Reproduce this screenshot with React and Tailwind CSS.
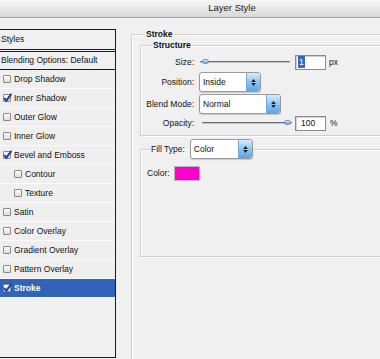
import React from 'react';

const items = [
  { label: 'Drop Shadow' },
  { label: 'Inner Shadow', checked: true },
  { label: 'Outer Glow' },
  { label: 'Inner Glow' },
  { label: 'Bevel and Emboss', checked: true },
  { label: 'Contour', sub: true },
  { label: 'Texture', sub: true },
  { label: 'Satin' },
  { label: 'Color Overlay' },
  { label: 'Gradient Overlay' },
  { label: 'Pattern Overlay' },
  { label: 'Stroke', checked: true, active: true },
];

const Check = ({ checked }) => (
  <span className="relative w-[8px] h-[8px] shrink-0 border border-[#8a8a8a] rounded-[1px] bg-gradient-to-b from-[#ffffff] to-[#dcdcdc]">
    {checked && (
      <svg viewBox="0 0 8 8" className="absolute -left-[1px] -top-[2px] w-[9px] h-[9px]">
        <path d="M1 4.5 L3 6.8 L7.5 0.8" fill="none" stroke="#1f3f9a" strokeWidth="1.8" />
      </svg>
    )}
  </span>
);

const Spinner = () => (
  <span className="w-[14px] h-full flex flex-col items-center justify-center gap-[1px] bg-gradient-to-b from-[#d6ecff] via-[#8cc4f4] to-[#5aa4e8] border-l border-[#7aa7d6] rounded-r-[3px]">
    <svg viewBox="0 0 6 4" className="w-[5px] h-[3px]"><path d="M3 0 L6 4 L0 4 Z" fill="#1a1a1a" /></svg>
    <svg viewBox="0 0 6 4" className="w-[5px] h-[3px]"><path d="M0 0 L6 0 L3 4 Z" fill="#1a1a1a" /></svg>
  </span>
);

const Select = ({ value, width }) => (
  <div className={`flex items-stretch h-[20px] bg-white border border-[#9a9a9a] rounded-[3px] shadow-[0_1px_1px_#c8c8c8] ${width}`}>
    <span className="flex-1 flex items-center pl-[3px] text-[8.5px] text-[#111]">{value}</span>
    <Spinner />
  </div>
);

const Slider = ({ thumbRight }) => (
  <div className="relative w-[90px] h-[10px] flex items-center">
    <div className="w-full h-[2px] bg-[#6e6e6e] border-b border-[#c4c4c4] rounded-full" />
    <span className={`absolute top-[2px] w-[7px] h-[5px] rounded-full bg-gradient-to-b from-[#dbeeff] to-[#5d9fe0] border border-[#6a8fbf] ${thumbRight ? 'right-[1px]' : 'left-[2px]'}`} />
  </div>
);

const NumInput = ({ children }) => (
  <div className="w-[31px] h-[15px] bg-white border border-[#8a8a8a] shadow-[inset_1px_1px_0_#d0d0d0] flex items-center pl-[2px] text-[8.5px] text-[#111]">
    {children}
  </div>
);

const Label = ({ children }) => (
  <span className="w-[53px] text-right text-[8.5px] text-[#111] shrink-0">{children}</span>
);

export default function App() {
  return (
    <div className="w-[380px] h-[359px] overflow-hidden bg-[#f0f0f0] text-[#111]" style={{ fontFamily: '"Liberation Sans", Arial, sans-serif' }}>
      <div className="h-[18px] flex items-center justify-center pl-[84px] bg-gradient-to-b from-[#f7f7f7] to-[#d8d8d8] border-b border-[#a3a3a3] text-[9.5px] text-[#222]">
        Layer Style
      </div>

      <div className="flex">
        <div className="w-[116px] h-[329px] mt-[11px] border-t border-r border-b border-[#1c1c1c] flex flex-col shrink-0">
          <div className="h-[20px] flex items-center pl-[1px] text-[8.5px] border-b border-[#1c1c1c]">Styles</div>
          <div className="h-[19px] mt-[1px] flex items-center pl-[1px] text-[8.5px] border-t border-b border-[#1c1c1c]">Blending Options: Default</div>
          {items.map((it) => (
            <div
              key={it.label}
              className={`h-[19px] flex items-center gap-[3px] border-b text-[8.5px] ${it.sub ? 'pl-[14px]' : 'pl-[3px]'} ${it.active ? 'bg-[#2f64b9] border-[#ffffff] text-white font-bold' : 'bg-[#efefef] border-[#fbfbfb]'}`}
            >
              <Check checked={it.checked} />
              <span>{it.label}</span>
            </div>
          ))}
        </div>

        <div className="flex-1 overflow-hidden">
          <fieldset className="ml-[15px] mt-[11px] w-[270px] h-[340px] border border-[#cfcfcf] shadow-[inset_1px_1px_0_#ffffff,1px_1px_0_#ffffff]">
            <legend className="ml-[12px] px-[2px] text-[8.5px] font-bold leading-[11px]">Stroke</legend>

            <fieldset className="ml-[8px] border border-[#cfcfcf] shadow-[inset_1px_1px_0_#ffffff,1px_1px_0_#ffffff] pt-[2px] pb-[3px]">
              <legend className="ml-[11px] px-[1px] text-[8.5px] font-bold leading-[11px]">Structure</legend>
              <div className="h-[18px] flex items-center">
                <Label>Size:</Label>
                <div className="ml-[6px]"><Slider /></div>
                <div className="ml-[5px]">
                  <NumInput><span className="bg-[#316ac5] text-white px-[1px]">1</span></NumInput>
                </div>
                <span className="ml-[3px] text-[8.5px]">px</span>
              </div>
              <div className="h-[20px] mt-[1px] flex items-center">
                <Label>Position:</Label>
                <div className="ml-[5px]"><Select value="Inside" width="w-[62px]" /></div>
              </div>
              <div className="h-[20px] mt-[2px] flex items-center">
                <Label>Blend Mode:</Label>
                <div className="ml-[5px]"><Select value="Normal" width="w-[82px]" /></div>
              </div>
              <div className="h-[18px] flex items-center">
                <Label>Opacity:</Label>
                <div className="ml-[8px]"><Slider thumbRight /></div>
                <div className="ml-[3px]"><NumInput><span className="pl-[3px]">100</span></NumInput></div>
                <span className="ml-[4px] text-[8.5px]">%</span>
              </div>
            </fieldset>

            <fieldset className="ml-[8px] mt-[3px] h-[118px] border border-[#cfcfcf] shadow-[inset_1px_1px_0_#ffffff,1px_1px_0_#ffffff]">
              <legend className="ml-[10px] flex items-center text-[8.5px]">
                <span className="pr-[5px]">Fill Type:</span>
                <Select value="Color" width="w-[63px]" />
              </legend>
              <div className="flex items-center mt-[7px] pl-[6px]">
                <span className="text-[8.5px]">Color:</span>
                <span className="ml-[4px] w-[26px] h-[15px] bg-[#ff00cc] border border-[#b9b9b9]" />
              </div>
            </fieldset>
          </fieldset>
        </div>
      </div>
    </div>
  );
}
